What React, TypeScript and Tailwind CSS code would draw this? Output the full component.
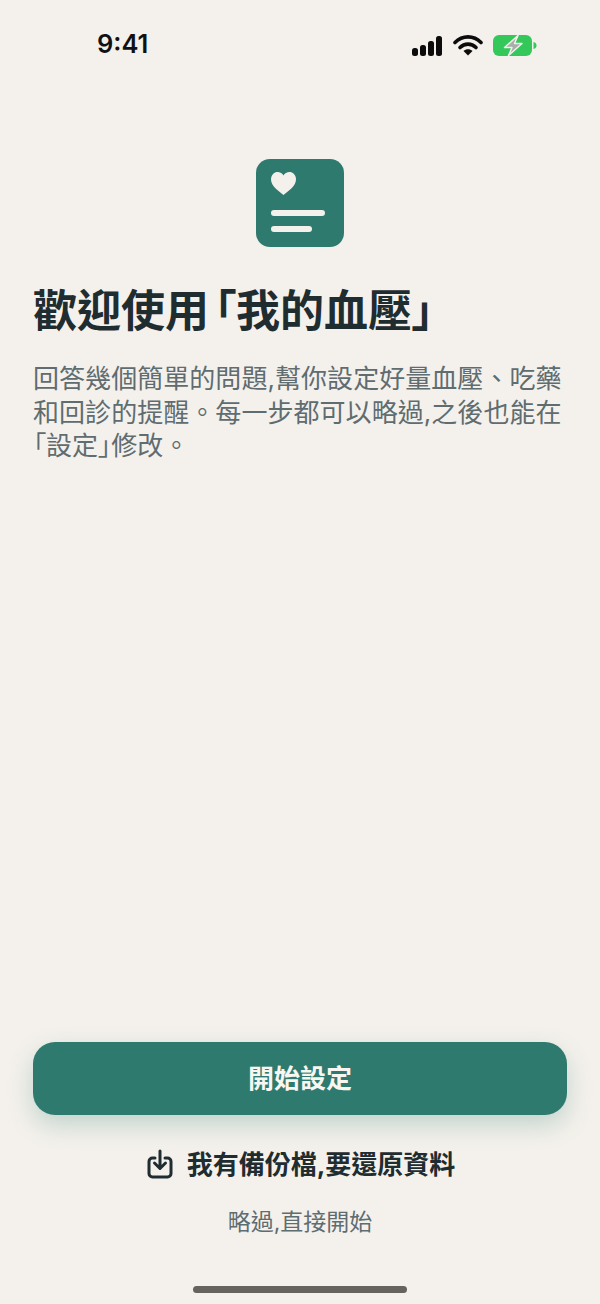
export default function App() {
  const cjk = "font-['Inter','Noto_Sans_CJK_TC','Noto_Sans_CJK_SC',sans-serif]";
  const palt = "[font-feature-settings:'palt']";
  return (
    <div className={`w-[600px] h-[1304px] bg-[#f4f1ec] flex flex-col overflow-hidden ${cjk}`}>
      <div className="h-[88px] pt-[27px] pl-[97px] pr-[63px] flex items-start justify-between">
        <span className="text-[25.500px] leading-[34px] font-semibold text-[#111]">9:41</span>
        <div className="flex items-center gap-[10px] pt-[7px]">
          <svg width="32" height="21" viewBox="0 0 32 21">
            <rect x="1" y="13" width="6" height="8" rx="2.5" fill="#0c0c0c" />
            <rect x="9" y="10" width="6" height="11" rx="2.5" fill="#0c0c0c" />
            <rect x="17" y="6" width="6" height="15" rx="2.5" fill="#0c0c0c" />
            <rect x="25" y="1" width="6" height="20" rx="2.5" fill="#0c0c0c" />
          </svg>
          <svg width="30" height="22" viewBox="0 0 30 22" fill="none">
            <path d="M2 8.500C9.500 1 20.500 1 28 8.500" stroke="#0c0c0c" strokeWidth="3.600" strokeLinecap="round" />
            <path d="M7 13.500C11.500 9 18.500 9 23 13.500" stroke="#0c0c0c" strokeWidth="3.600" strokeLinecap="round" />
            <path d="M10.500 17 15 21.500 19.500 17C17 14.600 13 14.600 10.500 17Z" fill="#0c0c0c" />
          </svg>
          <svg width="44" height="21" viewBox="0 0 44 21">
            <rect x="0" y="0" width="39" height="21" rx="6" fill="#34c759" />
            <path d="M40.500 7c2 .3 3 1.800 3 3.500s-1 3.200-3 3.500z" fill="#34c759" />
            <path d="M25 0.500 11.500 12.500H19L15.500 20.500 29 8.500H21.500Z" fill="#a9aeab" stroke="#f4f1ec" strokeWidth="1.500" strokeLinejoin="round" />
          </svg>
        </div>
      </div>

      <div className="px-[33px] flex flex-col flex-1">
        <div className="self-center mt-[71px] w-[88px] h-[88px] rounded-[14px] bg-[#2f7a6f]">
          <svg width="88" height="88" viewBox="0 0 88 88">
            <path d="M27.500 36C24 33 15 27.500 15 20.500C15 15.500 18.500 13 21.500 13C24 13 26.500 14.500 27.500 16.500C28.500 14.500 31 13 33.500 13C36.500 13 40 15.500 40 20.500C40 27.500 31 33 27.500 36Z" fill="#f4f1ec" />
            <rect x="15" y="51" width="54" height="6" rx="3" fill="#f4f1ec" />
            <rect x="15" y="67" width="41" height="6" rx="3" fill="#f4f1ec" />
          </svg>
        </div>
        <h1 className="mt-[37px] text-[44px] leading-[54px] font-bold text-[#1f2c30] whitespace-nowrap">
          歡迎使用<span className={`${palt} ml-[5px]`}>「</span>我的血壓<span className={palt}>」</span>
        </h1>
        <p className="mt-[24px] text-[26px] leading-[33.500px] tracking-[0.05px] text-[#5f6c70] whitespace-nowrap">
          回答幾個簡單的問題,幫你設定好量血壓、吃藥<br />和回診的提醒。每一步都可以略過,之後也能在<br /><span className={palt}>「</span>設定<span className={palt}>」</span>修改。
        </p>

        <div className="mt-auto h-[73px] rounded-[22px] bg-[#2f7a6f] flex items-center justify-center shadow-[0_10px_24px_rgba(47,122,111,0.25)]">
          <span className="text-[26px] font-bold text-[#f8f6f1]">開始設定</span>
        </div>
        <div className="mt-[25px] h-[48px] pl-[2px] flex items-center justify-center gap-[14px]">
          <svg width="26" height="30" viewBox="0 0 26 30" fill="none" stroke="#1f2c30" strokeWidth="3" strokeLinecap="round" strokeLinejoin="round">
            <path d="M8 9H5.500A3.500 3.500 0 0 0 2 12.500V24.500A3.500 3.500 0 0 0 5.500 28H20.500A3.500 3.500 0 0 0 24 24.500V12.500A3.500 3.500 0 0 0 20.500 9H18" />
            <path d="M13 2V19M7.500 14 13 19.500 18.500 14" />
          </svg>
          <span className="text-[26px] font-bold text-[#1f2c30]">我有備份檔,要還原資料</span>
        </div>
        <div className="mt-[17px] h-[34px] flex items-center justify-center">
          <span className="text-[23px] text-[#5f6c70]">略過,直接開始</span>
        </div>
      </div>

      <div className="mt-[47px] mb-[11px] self-center w-[214px] h-[7px] rounded-full bg-[#66625e]" />
    </div>
  );
}
